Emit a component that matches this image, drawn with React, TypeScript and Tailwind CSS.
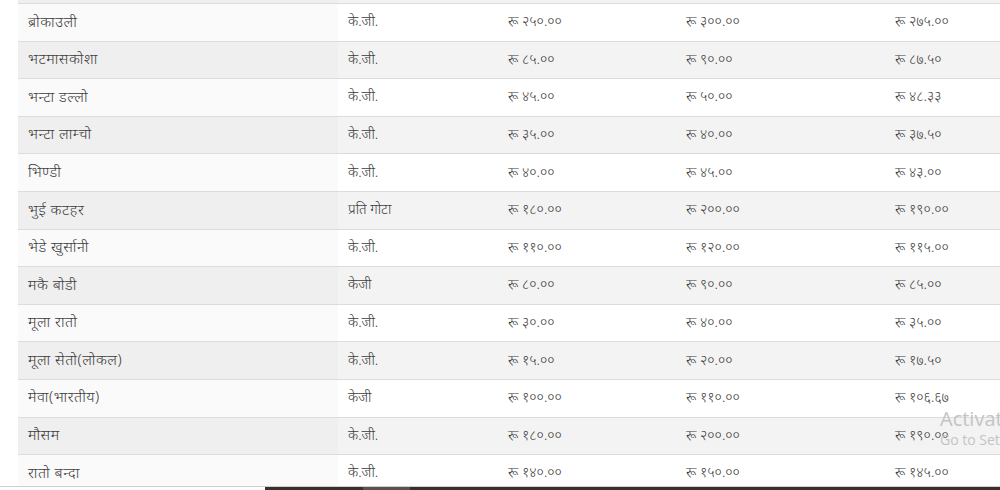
import React from "react";

const rows: [string, string, string, string, string][] = [
  ["ब्रोकाउली", "के.जी.", "रू २५०.००", "रू ३००.००", "रू २७५.००"],
  ["भटमासकोशा", "के.जी.", "रू ८५.००", "रू ९०.००", "रू ८७.५०"],
  ["भन्टा डल्लो", "के.जी.", "रू ४५.००", "रू ५०.००", "रू ४८.३३"],
  ["भन्टा लाम्चो", "के.जी.", "रू ३५.००", "रू ४०.००", "रू ३७.५०"],
  ["भिण्डी", "के.जी.", "रू ४०.००", "रू ४५.००", "रू ४३.००"],
  ["भुई कटहर", "प्रति गोटा", "रू १८०.००", "रू २००.००", "रू १९०.००"],
  ["भेडे खुर्सानी", "के.जी.", "रू ११०.००", "रू १२०.००", "रू ११५.००"],
  ["मकै बोडी", "केजी", "रू ८०.००", "रू ९०.००", "रू ८५.००"],
  ["मूला रातो", "के.जी.", "रू ३०.००", "रू ४०.००", "रू ३५.००"],
  ["मूला सेतो(लोकल)", "के.जी.", "रू १५.००", "रू २०.००", "रू १७.५०"],
  ["मेवा(भारतीय)", "केजी", "रू १००.००", "रू ११०.००", "रू १०६.६७"],
  ["मौसम", "के.जी.", "रू १८०.००", "रू २००.००", "रू १९०.००"],
  ["रातो बन्दा", "के.जी.", "रू १४०.००", "रू १५०.००", "रू १४५.००"],
];

export default function App() {
  return (
    <div
      className="relative w-[1000px] h-[490px] overflow-hidden bg-white flex flex-col text-[#3c3c3c] text-[14px]"
      style={{ fontFamily: '"Noto Sans", "Lato", sans-serif' }}
    >
      <div className="flex-1 overflow-hidden pl-[18px]">
        <div className="h-[3px] bg-[#f2f2f2] flex">
          <div className="w-[320px] bg-[#efefef]" />
          <div className="flex-1" />
        </div>
        {rows.map((r, i) => {
          const even = i % 2 === 1;
          return (
            <div
              key={i}
              className={`flex h-[37.6px] border-t border-[#dcdcdc] items-center font-light ${
                even ? "bg-[#f3f3f3]" : "bg-white"
              }`}
            >
              <div
                className={`w-[320px] h-full flex items-center pl-[10px] pb-[3px] text-[15px] tracking-[0.5px] ${
                  even ? "bg-[#efefef]" : "bg-[#fafafa]"
                }`}
              >
                {r[0]}
              </div>
              <div className="w-[160px] pl-[10px] pb-[3px]">{r[1]}</div>
              <div className="w-[178px] pl-[10px] pb-[3px]">{r[2]}</div>
              <div className="w-[209px] pl-[10px] pb-[3px]">{r[3]}</div>
              <div className="flex-1 pl-[10px] pb-[3px]">{r[4]}</div>
            </div>
          );
        })}
      </div>
      <div className="h-[4px] flex border-t border-[#cfcfcf]">
        <div className="w-[265px] bg-white" />
        <div className="w-[98px] bg-[#3a3029]" />
        <div className="w-[47px] bg-[#5b524b]" />
        <div className="flex-1 bg-[#3a3029]" />
      </div>
      <div
        className="absolute left-[940px] top-[409px] text-[#c4c4c4] leading-none pointer-events-none whitespace-nowrap"
        style={{ fontFamily: '"Open Sans", sans-serif' }}
      >
        <div className="text-[20px]">Activate Windows</div>
        <div className="text-[14px] mt-[4px]">Go to Settings to activate Windows.</div>
      </div>
    </div>
  );
}
